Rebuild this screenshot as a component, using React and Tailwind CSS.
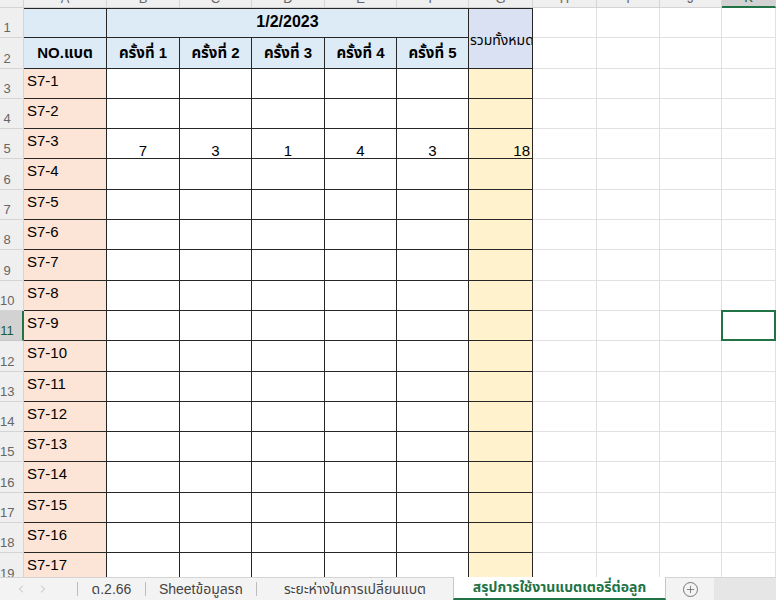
import { Plus, ChevronLeft, ChevronRight } from 'lucide-react'

const COLS = ['A', 'B', 'C', 'D', 'E', 'F', 'G', 'H', 'I', 'J', 'K']
const ROUNDS = [1, 2, 3, 4, 5]
const BLANK = ['H', 'I', 'J', 'K']

// tallies for the row that has data (S7-3)
const counts = { 5: [7, 3, 1, 4, 3] }

const cellFont = "font-['Liberation_Sans','Noto_Sans_Thai','Tahoma',sans-serif]"
const tableLine = 'border-r border-b border-[#262626]'
const gridLine = 'border-r border-b border-[#e1e1e1]'

function RowHead({ n }) {
  const active = n === 11
  return (
    <div
      className={`flex items-end pb-[2px] text-[13px] leading-[14px] ${
        active
          ? 'bg-[#d2d2d2] text-[#1d5c37] border-r-2 border-r-[#217346] border-b border-b-[#c6c6c6]'
          : 'bg-[#efefef] text-[#666] border-r border-b border-[#d4d4d4]'
      }`}
    >
      <span className="w-[14px] text-center">{n}</span>
    </div>
  )
}

function BlankCells({ row }) {
  return BLANK.map((c) =>
    row === 11 && c === 'K' ? (
      <div key={c} className="border-2 border-[#217346] -ml-px -mt-px" />
    ) : (
      <div key={c} className={gridLine} />
    )
  )
}

function DataRow({ row }) {
  const vals = counts[row]
  return (
    <>
      <RowHead n={row} />
      <div className={`${tableLine} bg-[#fce4d6] pl-[3px] pt-[3px] text-[15px] leading-[17px] text-black`}>
        S7-{row - 2}
      </div>
      {ROUNDS.map((r, i) => (
        <div key={r} className={`${tableLine} bg-white flex items-end justify-center text-[15px] leading-[14px]`}>
          {vals ? vals[i] : ''}
        </div>
      ))}
      <div className={`${tableLine} bg-[#fff2cc] flex items-end justify-end pr-[2px] text-[15px] leading-[14px]`}>
        {vals ? vals.reduce((a, b) => a + b, 0) : ''}
      </div>
      <BlankCells row={row} />
    </>
  )
}

export default function App() {
  const rows = Array.from({ length: 17 }, (_, i) => i + 3)

  return (
    <div className={`w-[776px] h-[600px] overflow-hidden bg-white flex flex-col ${cellFont}`}>
      <div className="h-[577px] overflow-hidden">
        <div className="grid grid-cols-[24px_83px_73px_72px_73px_72px_72px_64px_64px_63px_62px_1fr] grid-rows-[8px_repeat(19,30.3px)]">
          {/* column letters, mostly scrolled out of view */}
          <div className="bg-[#efefef] border-r border-b border-[#d4d4d4]" />
          {COLS.map((c) => (
            <div
              key={c}
              className={`overflow-hidden flex items-end justify-center text-[13px] leading-[14px] pb-[1px] ${
                c === 'K'
                  ? 'bg-[#d2d2d2] text-[#1d5c37] border-b-2 border-b-[#217346] border-r border-r-[#d4d4d4]'
                  : 'bg-[#efefef] text-[#666] border-r border-b border-[#d4d4d4]'
              }`}
            >
              {c}
            </div>
          ))}

          {/* row 1 */}
          <RowHead n={1} />
          <div className={`${tableLine} border-t bg-[#ddebf7]`} />
          <div className={`${tableLine} border-t bg-[#ddebf7] col-span-5 flex items-center justify-center pb-[2px] text-[16px] font-bold`}>
            1/2/2023
          </div>
          <div className={`${tableLine} border-t bg-[#d9e1f2] row-span-2 flex items-center justify-start pl-px overflow-hidden whitespace-nowrap text-[14px] pt-[4px]`}>
            รวมทั้งหมด
          </div>
          <BlankCells row={1} />

          {/* row 2 */}
          <RowHead n={2} />
          <div className={`${tableLine} bg-[#ddebf7] flex items-center justify-center text-[15px] font-bold`}>
            NO.แบต
          </div>
          {ROUNDS.map((r) => (
            <div key={r} className={`${tableLine} bg-[#ddebf7] flex items-center justify-center text-[15px] font-bold`}>
              ครั้งที่ {r}
            </div>
          ))}
          <BlankCells row={2} />

          {rows.map((r) => (
            <DataRow key={r} row={r} />
          ))}
        </div>
      </div>

      {/* sheet tabs */}
      <div className="h-[23px] flex items-stretch bg-[#f3f3f3] border-t border-[#d4d4d4] text-[14px] text-[#444] whitespace-nowrap">
        <div className="w-[77px] flex items-center gap-[10px] pl-[15px] text-[#a9a9a9]">
          <ChevronLeft size={12} strokeWidth={1.5} />
          <ChevronRight size={12} strokeWidth={1.5} />
        </div>
        <div className="w-px bg-[#bdbdbd] my-[4px]" />
        <div className="w-[67px] flex items-center justify-center">ด.2.66</div>
        <div className="w-px bg-[#bdbdbd] my-[4px]" />
        <div className="w-[110px] flex items-center justify-center">Sheetข้อมูลรถ</div>
        <div className="w-px bg-[#bdbdbd] my-[4px]" />
        <div className="w-[196px] flex items-center justify-center">ระยะห่างในการเปลี่ยนแบต</div>
        <div className="w-[213px] -mt-px bg-white border-x border-[#c8c8c8] border-b-2 border-b-[#217346] flex items-center justify-center font-bold text-[#217346]">
          สรุปการใช้งานแบตเตอรี่ต่อลูก
        </div>
        <div className="w-[48px] flex items-center justify-center">
          <span className="w-[15px] h-[15px] rounded-full border border-[#777] flex items-center justify-center text-[#555]">
            <Plus size={11} strokeWidth={1.5} />
          </span>
        </div>
        <div className="flex-1 bg-[#e6e6e6]" />
      </div>
    </div>
  )
}
